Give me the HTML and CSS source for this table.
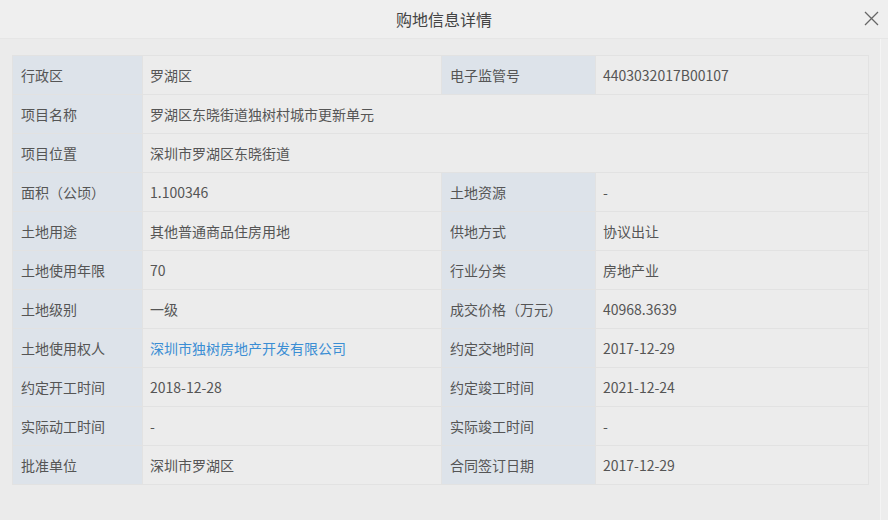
FILE: index.html
```html
<!DOCTYPE html>
<html lang="zh-CN">
<head>
    <meta charset="UTF-8">
    <meta name="viewport" content="width=device-width, initial-scale=1.0">
    <title>购地信息详情</title>
    <link rel="stylesheet" href="styles.css">
</head>
<body>
    <div class="dialog">
        <div class="dialog-header">
            <span class="dialog-title">购地信息详情</span>
            <span class="dialog-close">
                <svg width="15" height="15" viewBox="0 0 15 15"><path d="M1 1L14 14M14 1L1 14" stroke="#666" stroke-width="1.3" fill="none"/></svg>
            </span>
        </div>
        <div class="dialog-body">
            <div class="content">
                <table class="info">
                    <tr>
                        <td class="label">行政区</td>
                        <td class="value">罗湖区</td>
                        <td class="label">电子监管号</td>
                        <td class="value">4403032017B00107</td>
                    </tr>
                    <tr>
                        <td class="label">项目名称</td>
                        <td class="value" colspan="3">罗湖区东晓街道独树村城市更新单元</td>
                    </tr>
                    <tr>
                        <td class="label">项目位置</td>
                        <td class="value" colspan="3">深圳市罗湖区东晓街道</td>
                    </tr>
                    <tr>
                        <td class="label">面积（公顷）</td>
                        <td class="value">1.100346</td>
                        <td class="label">土地资源</td>
                        <td class="value">-</td>
                    </tr>
                    <tr>
                        <td class="label">土地用途</td>
                        <td class="value">其他普通商品住房用地</td>
                        <td class="label">供地方式</td>
                        <td class="value">协议出让</td>
                    </tr>
                    <tr>
                        <td class="label">土地使用年限</td>
                        <td class="value">70</td>
                        <td class="label">行业分类</td>
                        <td class="value">房地产业</td>
                    </tr>
                    <tr>
                        <td class="label">土地级别</td>
                        <td class="value">一级</td>
                        <td class="label">成交价格（万元）</td>
                        <td class="value">40968.3639</td>
                    </tr>
                    <tr>
                        <td class="label">土地使用权人</td>
                        <td class="value"><a class="link" href="#">深圳市独树房地产开发有限公司</a></td>
                        <td class="label">约定交地时间</td>
                        <td class="value">2017-12-29</td>
                    </tr>
                    <tr>
                        <td class="label">约定开工时间</td>
                        <td class="value">2018-12-28</td>
                        <td class="label">约定竣工时间</td>
                        <td class="value">2021-12-24</td>
                    </tr>
                    <tr>
                        <td class="label">实际动工时间</td>
                        <td class="value">-</td>
                        <td class="label">实际竣工时间</td>
                        <td class="value">-</td>
                    </tr>
                    <tr>
                        <td class="label">批准单位</td>
                        <td class="value">深圳市罗湖区</td>
                        <td class="label">合同签订日期</td>
                        <td class="value">2017-12-29</td>
                    </tr>
                </table>
            </div>
            <div class="scrollbar"></div>
        </div>
    </div>
</body>
</html>
```

FILE: styles.css
```css
body {
    margin: 0;
    font-family: "Noto Sans CJK SC", "Liberation Sans", sans-serif;
    background-color: #ebebeb;
    color: #555;
}
.dialog {
    width: 888px;
    height: 520px;
    display: flex;
    flex-direction: column;
}
.dialog-header {
    height: 38px;
    display: flex;
    align-items: center;
    justify-content: center;
    position: relative;
    background: #efefef;
    border-bottom: 1px solid #e6e6e6;
}
.dialog-title {
    font-size: 16px;
    color: #444;
}
.dialog-close {
    position: absolute;
    right: 9px;
    top: 11px;
    display: flex;
}
.dialog-body {
    flex: 1;
    display: flex;
}
.content {
    flex: 1;
    padding: 16px 11px 0 12px;
}
.scrollbar {
    width: 7px;
    border-left: 1px solid #f4f4f4;
    background: #ededed;
}
.info {
    width: 857px;
    border-collapse: collapse;
    font-size: 14px;
    table-layout: fixed;
}
.info td {
    height: 37px;
    padding: 0 0 1px 8px;
    border: 1px solid #e2e2e2;
    white-space: nowrap;
}
.info td.label {
    background: #dde3ea;
    color: #555;
}
.info td.value {
    padding-left: 7px;
    background: #ececec;
    color: #555;
}
.info tr td:nth-child(1) {
    width: 121px;
}
.info tr td:nth-child(2) {
    width: 291px;
}
.info tr td.label:nth-child(3) {
    width: 145px;
}
.link {
    color: #3b8ed4;
    text-decoration: none;
}
```
